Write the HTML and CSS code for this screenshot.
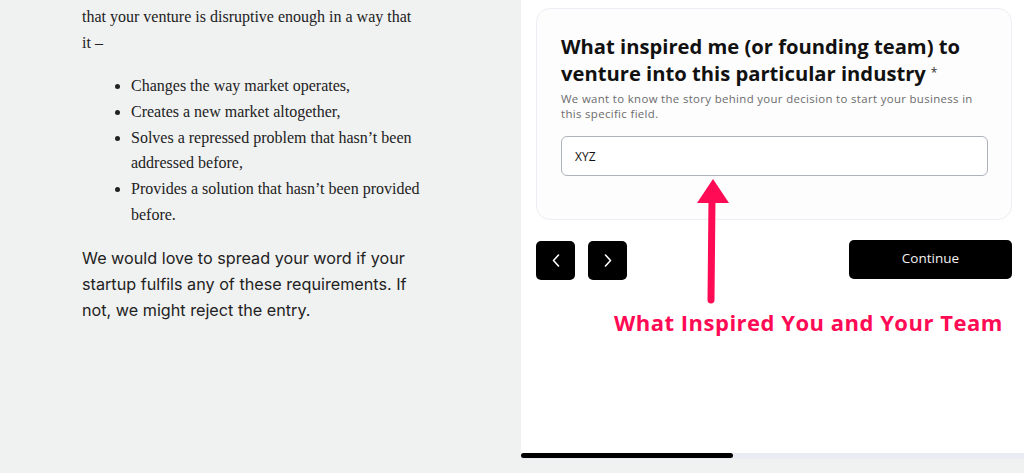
FILE: index.html
```html
<!DOCTYPE html>
<html lang="en">
<head>
<meta charset="utf-8"/>
<title>Startup entry</title>
<link rel="stylesheet" href="styles.css">
</head>
<body>
<div class="page">
  <!-- Article column -->
  <div class="article">
    <p class="serif">that your venture is disruptive enough in a way that it –</p>
    <ul class="serif">
      <li>Changes the way market operates,</li>
      <li>Creates a new market altogether,</li>
      <li>Solves a repressed problem that hasn’t been addressed before,</li>
      <li>Provides a solution that hasn’t been provided before.</li>
    </ul>
    <p class="sans">We would love to spread your word if your startup fulfils any of these requirements. If not, we might reject the entry.</p>
  </div>

  <!-- Form screenshot -->
  <div class="shot">
    <div class="card">
      <h2>What inspired me (or founding team) to venture into this particular industry<span class="req">*</span></h2>
      <p class="hint">We want to know the story behind your decision to start your business in this specific field.</p>
      <input class="field" type="text" value="XYZ"/>
    </div>
    <div class="nav">
      <button class="square" type="button">
        <svg width="8" height="13" viewBox="0 0 8 13"><path d="M6.5 1 L1.5 6.5 L6.5 12" fill="none" stroke="#fff" stroke-width="1.6" stroke-linecap="round" stroke-linejoin="round"/></svg>
      </button>
      <button class="square" type="button">
        <svg width="8" height="13" viewBox="0 0 8 13"><path d="M1.5 1 L6.5 6.5 L1.5 12" fill="none" stroke="#fff" stroke-width="1.6" stroke-linecap="round" stroke-linejoin="round"/></svg>
      </button>
      <button class="continue" type="button">Continue</button>
    </div>
    <div class="scrollbar"><div class="thumb"></div></div>

    <!-- annotation over the screenshot -->
    <svg class="arrow" width="34" height="128" viewBox="0 0 34 128">
      <path d="M17 2 L33 26 L1 26 Z" fill="#ff0a54"/>
      <line x1="16" y1="22" x2="15" y2="123" stroke="#ff0a54" stroke-width="7" stroke-linecap="round"/>
    </svg>
    <div class="callout">What Inspired You and Your Team</div>
  </div>
</div>
</body>
</html>
```

FILE: styles.css
```css
body {
  margin: 0;
  padding: 0;
  background: #f0f1f1;
  font-family: 'Inter', sans-serif;
}

.page {
  display: flex;
  height: 473px;
  overflow: hidden;
}

.article {
  width: 521px;
  box-sizing: border-box;
  padding: 4px 0 0 82px;
  color: #222;
}

.article p,
.article ul {
  width: 340px;
  margin: 0 0 17px;
}

.serif {
  font-family: 'Liberation Serif', serif;
  font-size: 16px;
  line-height: 26px;
}

.article ul {
  padding-left: 49px;
  box-sizing: border-box;
  width: 350px;
}

.article li {
  line-height: 25.8px;
}

.sans {
  font-family: 'Inter', sans-serif;
  font-size: 16.2px;
  line-height: 26px;
  color: #222;
}

.shot {
  position: relative;
  flex: 1;
  height: 459px;
  background: #fff;
  display: flex;
  flex-direction: column;
}

.card {
  margin: 8px 12px 0 15px;
  padding: 24px 23px 43px 24px;
  border: 1px solid #eceef3;
  border-radius: 14px;
  background: #fdfdfe;
}

.card h2 {
  margin: 0;
  font-family: 'Open Sans', sans-serif;
  font-weight: 700;
  font-size: 20.2px;
  line-height: 27px;
  color: #111;
}

.req {
  display: inline-block;
  margin-left: 5px;
  font-size: 12px;
  font-weight: 400;
  line-height: 12px;
  vertical-align: 4px;
  color: #333;
}

.hint {
  margin: 4px 0 15px;
  font-family: 'Open Sans', sans-serif;
  font-size: 11.4px;
  letter-spacing: 0.35px;
  line-height: 15px;
  color: #6b6b6b;
}

.field {
  display: block;
  width: 100%;
  height: 40px;
  box-sizing: border-box;
  padding: 0 13px;
  border: 1px solid #aeb2bd;
  border-radius: 6px;
  background: #fff;
  font-family: 'Open Sans', sans-serif;
  font-size: 12px;
  color: #111;
}

.nav {
  display: flex;
  align-items: flex-start;
  gap: 13px;
  margin: 20px 12px 0 15px;
}

.square {
  width: 39px;
  height: 39px;
  margin-top: 1px;
  border: none;
  border-radius: 5px;
  background: #000;
  display: flex;
  align-items: center;
  justify-content: center;
  padding: 0;
}

.continue {
  margin-left: auto;
  width: 163px;
  height: 39px;
  padding: 0 0 3px;
  border: none;
  border-radius: 5px;
  background: #000;
  color: #f2f2f2;
  font-family: 'Open Sans', sans-serif;
  font-size: 13.5px;
  font-weight: 500;
}

.scrollbar {
  margin-top: auto;
  height: 6px;
  background: #e9ecf3;
  display: flex;
}

.thumb {
  width: 212px;
  height: 5px;
  background: #000;
  border-radius: 3px;
}

.arrow {
  position: absolute;
  left: 175px;
  top: 177px;
}

.callout {
  position: absolute;
  left: 93px;
  top: 307px;
  font-family: 'Open Sans', sans-serif;
  font-weight: 700;
  font-size: 22px;
  color: #ff0a54;
  letter-spacing: 0.5px;
}
```
